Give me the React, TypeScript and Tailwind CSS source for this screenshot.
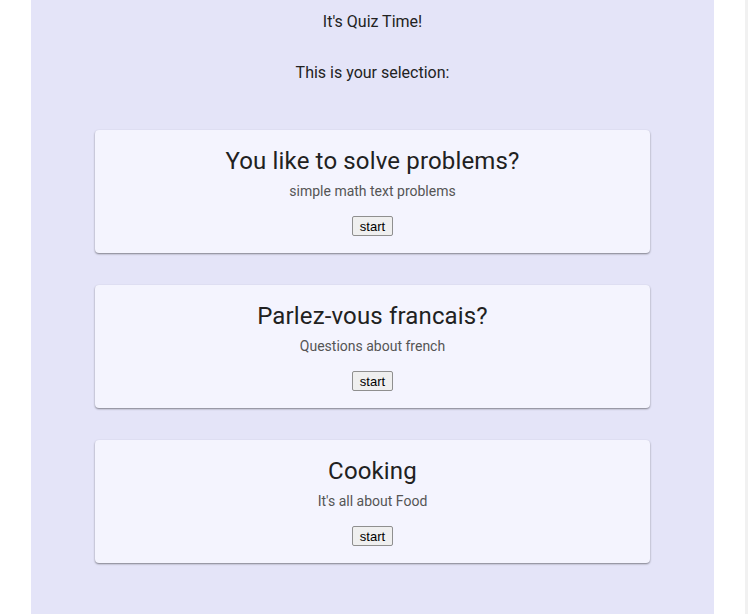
const QUIZZES = [
  { title: "You like to solve problems?", description: "simple math text problems" },
  { title: "Parlez-vous francais?", description: "Questions about french" },
  { title: "Cooking", description: "It's all about Food" },
];

function QuizCard({ title, description }: { title: string; description: string }) {
  return (
    <div className="bg-[#f4f4fe] rounded-[4px] shadow-[0_1px_2px_rgba(0,0,0,0.45)] pt-[16px] pb-[17px] flex flex-col items-center">
      <h2 className="text-[24px] leading-[30px] font-normal tracking-[0.15px] text-[#212121]">{title}</h2>
      <p className="mt-[5px] text-[14px] leading-[20px] text-[#555555]">{description}</p>
      <button
        type="button"
        className="mt-[15px] h-[20px] px-[7px] border border-[#8f8f8f] rounded-[2px] bg-[#efefef] text-[13px] leading-none text-black"
        style={{ fontFamily: "Arial, 'Liberation Sans', sans-serif" }}
      >
        start
      </button>
    </div>
  );
}

export default function App() {
  return (
    <div className="flex min-h-screen bg-white" style={{ fontFamily: "Roboto, 'Noto Sans', sans-serif" }}>
      <div className="flex-1 flex justify-center">
        <div className="w-[683px] bg-[#e4e4f8] pt-[10px] pb-[60px] text-center">
          <p className="text-[16px] leading-6 text-[#222222]">It's Quiz Time!</p>
          <p className="mt-[27px] text-[16px] leading-6 text-[#222222]">This is your selection:</p>
          <div className="mt-[45px] mx-[64px] flex flex-col gap-[32px]">
            {QUIZZES.map((q) => (
              <QuizCard key={q.title} title={q.title} description={q.description} />
            ))}
          </div>
        </div>
      </div>
      <div className="w-[3px] bg-[#f1f1f1]" />
    </div>
  );
}
